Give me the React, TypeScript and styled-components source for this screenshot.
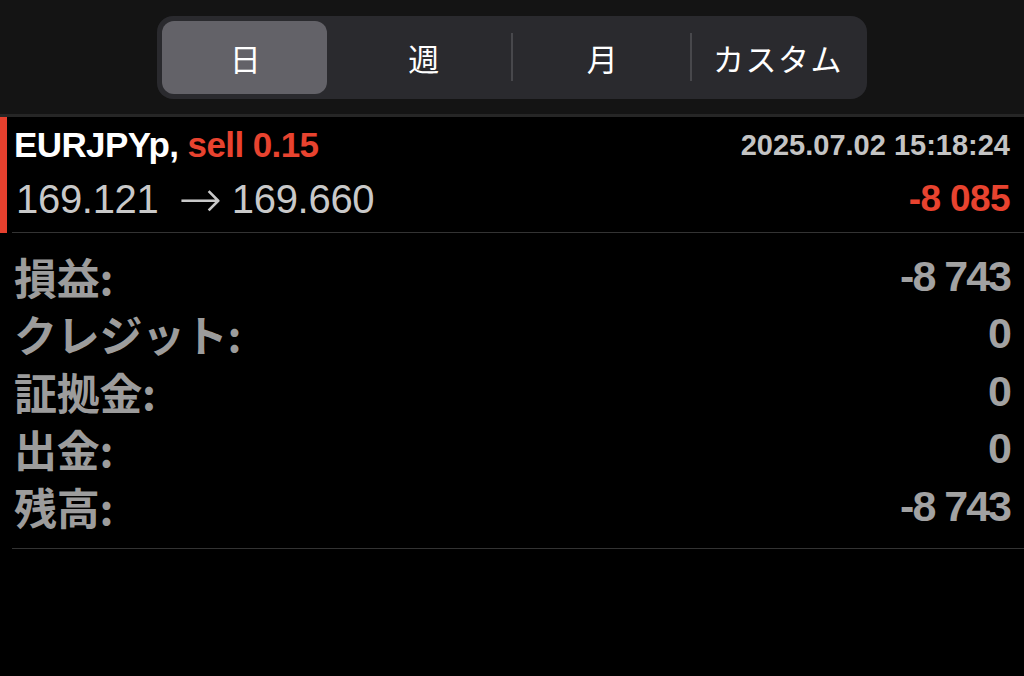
import React from "react";
import styled, { createGlobalStyle } from "styled-components";

const periods = ["日", "週", "月", "カスタム"];

const summary = [
  { label: "損益:", value: "-8 743" },
  { label: "クレジット:", value: "0" },
  { label: "証拠金:", value: "0" },
  { label: "出金:", value: "0" },
  { label: "残高:", value: "-8 743" },
];

export default function App() {
  const selected = 0;

  return (
    <>
      <GlobalStyle />
      <Page>
        <Header>
          <Segmented>
            {periods.map((p, i) => (
              <Segment
                key={p}
                $active={i === selected}
                $divider={i > 0 && i !== selected && i - 1 !== selected}
              >
                {p}
              </Segment>
            ))}
          </Segmented>
        </Header>

        <Trade>
          <TradeBody>
            <Line>
              <Symbol>
                EURJPYp, <Red>sell 0.15</Red>
              </Symbol>
              <Time>2025.07.02 15:18:24</Time>
            </Line>
            <Line>
              <Prices>
                169.121<Arrow>→</Arrow>169.660
              </Prices>
              <Profit>-8 085</Profit>
            </Line>
          </TradeBody>
        </Trade>

        <Summary>
          {summary.map((row) => (
            <Row key={row.label}>
              <Label>{row.label}</Label>
              <Value>{row.value}</Value>
            </Row>
          ))}
        </Summary>
      </Page>
    </>
  );
}

const GlobalStyle = createGlobalStyle`
html, body {
  margin: 0;
  padding: 0;
  background-color: #000000;
  font-family: "Liberation Sans", "Noto Sans CJK JP", sans-serif;
}

#root {
  min-height: 100vh;
}
`;

const Page = styled.div`
  display: flex;
  flex-direction: column;
  min-height: 100vh;
  background-color: #000000;
`;

const Header = styled.header`
  height: 117px;
  box-sizing: border-box;
  padding-top: 16px;
  display: flex;
  justify-content: center;
  background-color: #141414;
  border-bottom: 3px solid #262626;
`;

const Segmented = styled.div`
  width: 710px;
  height: 83px;
  box-sizing: border-box;
  padding: 5px;
  display: grid;
  grid-template-columns: 172px 178px 179px 1fr;
  background-color: #2a2a2e;
  border-radius: 16px;
`;

const Segment = styled.div<{ $active: boolean; $divider: boolean }>`
  position: relative;
  display: flex;
  align-items: center;
  justify-content: center;
  margin-right: ${({ $active }) => ($active ? "7px" : "0")};
  border-radius: 12px;
  background-color: ${({ $active }) => ($active ? "#636268" : "transparent")};
  color: #ffffff;
  font-family: "Noto Sans CJK JP", sans-serif;
  font-size: 31px;
  letter-spacing: 1.5px;
  padding-left: 3px;

  &::before {
    content: "";
    display: ${({ $divider }) => ($divider ? "block" : "none")};
    position: absolute;
    left: -1px;
    top: 12px;
    bottom: 13px;
    width: 2px;
    background-color: #48484c;
  }
`;

const Trade = styled.section`
  border-left: 7px solid #e5402e;
`;

const TradeBody = styled.div`
  margin-left: 5px;
  padding: 1px 14px 6px 2px;
  border-bottom: 1px solid #333333;
`;

const Line = styled.div`
  height: 54px;
  display: flex;
  align-items: center;
  justify-content: space-between;
`;

const Symbol = styled.div`
  color: #ffffff;
  font-size: 35px;
  font-weight: bold;
  letter-spacing: -0.6px;
  white-space: pre;
`;

const Red = styled.span`
  color: #e8432f;
`;

const Time = styled.div`
  color: #c4c4c4;
  font-size: 29px;
  font-weight: bold;
  letter-spacing: 0px;
`;

const Prices = styled.div`
  display: flex;
  align-items: center;
  color: #c9c9c9;
  font-size: 40px;
  letter-spacing: -0.3px;
  padding-left: 2px;
`;

const Arrow = styled.span`
  font-family: "DejaVu Sans", sans-serif;
  font-size: 52px;
  font-weight: 200;
  line-height: 1;
  margin: 0 10px 0 20px;
`;

const Profit = styled.div`
  color: #e8432f;
  font-size: 37px;
  font-weight: bold;
  letter-spacing: -0.6px;
`;

const Summary = styled.section`
  margin-left: 12px;
  padding: 15px 14px 12px 2px;
  border-bottom: 1px solid #333333;
`;

const Row = styled.div`
  height: 57.5px;
  display: flex;
  align-items: center;
  justify-content: space-between;
`;

const Label = styled.div`
  color: #9c9c9c;
  font-family: "Noto Sans CJK JP", sans-serif;
  font-size: 43px;
  line-height: 1.2;
  font-weight: bold;
  letter-spacing: -0.3px;
`;

const Value = styled.div`
  color: #a2a2a2;
  font-size: 43px;
  line-height: 1.2;
  font-weight: bold;
  letter-spacing: -2px;
`;
